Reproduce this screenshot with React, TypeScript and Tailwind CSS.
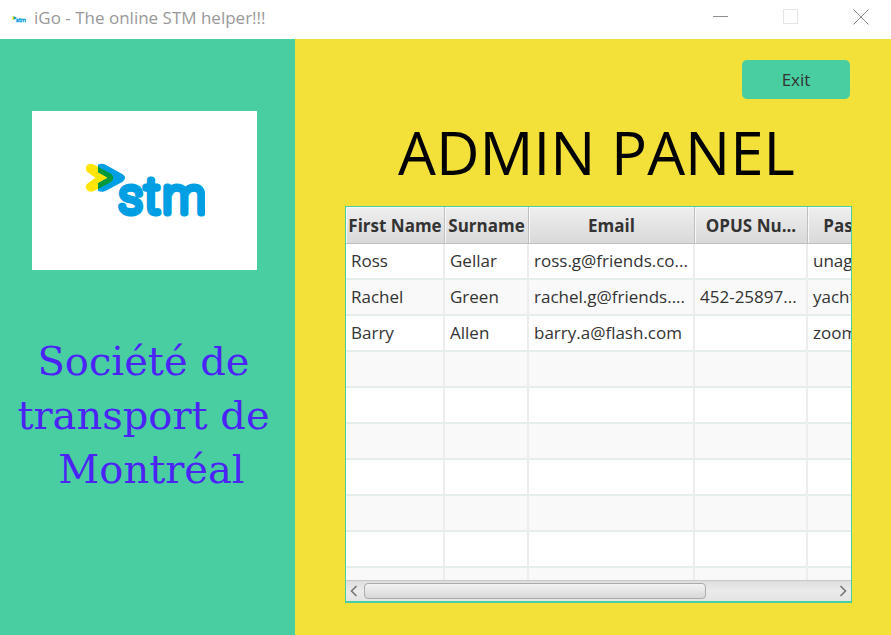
import React, { useId } from "react";

const columns = [
  { title: "First Name", width: "w-[99px]" },
  { title: "Surname", width: "w-[84px]" },
  { title: "Email", width: "w-[166px]" },
  { title: "OPUS Nu...", width: "w-[113px]" },
  { title: "Password", width: "w-[113px]" },
];

const users = [
  ["Ross", "Gellar", "ross.g@friends.co...", "", "unagi"],
  ["Rachel", "Green", "rachel.g@friends....", "452-25897...", "yacht"],
  ["Barry", "Allen", "barry.a@flash.com", "", "zoom"],
];

const emptyRow = ["", "", "", "", ""];
const rows = [...users, ...Array.from({ length: 7 }, () => emptyRow)];

function StmLogo({ className }: { className: string }) {
  const clipId = useId();
  const back =
    "M62 41Q69 41 76 46L123 71Q137 83 123 96L76 121Q66 128 56 124Q42 116 50 103L76 83L51 65Q44 55 51 46Q56 41 62 41Z";
  const front =
    "M84 44Q96 38 108 45L158 73Q173 83 158 95L108 122Q96 128 84 122V99L112 83L84 67Z";
  return (
    <svg viewBox="45 39 360 165" className={className} role="img" aria-label="stm">
      <clipPath id={clipId}>
        <path d={front} />
      </clipPath>
      <path d={back} fill="#ffe500" />
      <path d={front} fill="#009fe3" />
      <path d={back} fill="#009a3d" clipPath={`url(#${clipId})`} />
      <path d="M83 67L112 83L83 99Z" fill="#ffe500" />
      <text
        y="190"
        x="147 224 279"
        fontSize="142"
        fontWeight="100"
        fill="#009fe3"
        stroke="#009fe3"
        strokeWidth="21"
        strokeLinejoin="round"
        className="font-[Roboto,sans-serif]"
      >
        stm
      </text>
    </svg>
  );
}

function TitleBar() {
  return (
    <header className="flex h-[39px] shrink-0 items-center bg-white pl-3 pr-[22px]">
      <StmLogo className="h-[7px] w-[14px]" />
      <span className="ml-2 -mt-1 grow text-[17px] leading-6 text-[#999999]">
        iGo - The online STM helper!!!
      </span>
      <div className="-mt-1.5 flex gap-[54px]">
        <button aria-label="Minimize">
          <svg width="16" height="16" className="block" stroke="#8f8f8f" fill="none">
            <path d="M0 7.5H15" />
          </svg>
        </button>
        <button aria-label="Maximize" disabled>
          <svg width="16" height="16" className="block" stroke="#e6e6e6" fill="none">
            <rect x="0.5" y="0.5" width="14" height="14" />
          </svg>
        </button>
        <button aria-label="Close">
          <svg width="16" height="16" className="block" stroke="#8a8a8a" fill="none">
            <path d="M0.5 0.5L15.5 15.5M15.5 0.5L0.5 15.5" />
          </svg>
        </button>
      </div>
    </header>
  );
}

function Sidebar() {
  return (
    <aside className="w-[295px] shrink-0 bg-[#49cea2] pt-[72px]">
      <div className="ml-8 flex h-[159px] w-[225px] items-center justify-center bg-white">
        <StmLogo className="h-[55px] w-[120px]" />
      </div>
      <p className="mt-16 pr-2 text-center font-['DejaVu_Serif',serif] text-[40px] leading-[54px] text-[#4b23f5]">
        Société de
        <br />
        transport de
        <br />
        <span className="pl-4">Montréal</span>
      </p>
    </aside>
  );
}

function UserTable() {
  return (
    <div className="min-h-0 grow overflow-hidden bg-white">
      <table className="w-[575px] table-fixed border-separate border-spacing-0 text-[17px] leading-6 text-[#333333]">
        <thead>
          <tr>
            {columns.map((c) => (
              <th
                key={c.title}
                className={`${c.width} h-[37px] overflow-hidden whitespace-nowrap border-b border-r border-[#bfbfbf] bg-linear-to-b from-[#efefef] to-[#d9d9d9] p-0 pt-0.5 text-center font-bold shadow-[inset_1px_1px_0_#f8f8f8]`}
              >
                {c.title}
              </th>
            ))}
          </tr>
        </thead>
        <tbody>
          {rows.map((row, i) => (
            <tr key={i} className="bg-white even:bg-[#f9f9f9]">
              {row.map((value, j) => (
                <td
                  key={j}
                  className="h-9 overflow-hidden whitespace-nowrap border-b-2 border-r-2 border-b-[#e6eeec] border-r-[#ededed] py-0 pl-[5px] pr-0"
                >
                  {value}
                </td>
              ))}
            </tr>
          ))}
        </tbody>
      </table>
    </div>
  );
}

function ScrollBar() {
  return (
    <div className="flex h-[21px] shrink-0 items-center border-t border-[#c8c8c8] bg-linear-to-b from-[#dedede] via-[#ebebeb] to-[#e4e4e4] px-1">
      <button aria-label="Scroll left">
        <svg width="8" height="12" className="block" fill="none" stroke="#757575" strokeWidth="1.6">
          <path d="M6.5 1L1.5 6L6.5 11" />
        </svg>
      </button>
      <div className="mx-[6px] grow">
        <div className="h-4 w-[73%] rounded-[4px] border border-[#ababab] bg-linear-to-b from-[#f3f3f3] to-[#d8d8d8]" />
      </div>
      <button aria-label="Scroll right">
        <svg width="8" height="12" className="block" fill="none" stroke="#757575" strokeWidth="1.6">
          <path d="M1.5 1L6.5 6L1.5 11" />
        </svg>
      </button>
    </div>
  );
}

export default function App() {
  return (
    <div className="flex h-screen flex-col font-['Open_Sans','Noto_Sans',sans-serif]">
      <TitleBar />
      <div className="flex min-h-0 grow">
        <Sidebar />
        <main className="flex min-w-0 grow flex-col bg-[#f3e13a] pb-8 pl-[50px] pr-[39px] pt-[21px]">
          <button className="mr-0.5 h-[39px] w-[108px] shrink-0 self-end rounded-[5px] bg-[#49cea2] text-[17px] leading-6 text-[#333333]">
            Exit
          </button>
          <h1 className="mt-2 pr-1 text-center text-[60px] leading-[90px] text-black">ADMIN PANEL</h1>
          <section className="mt-[9px] flex min-h-0 grow flex-col border border-b-2 border-[#49cea2]">
            <UserTable />
            <ScrollBar />
          </section>
        </main>
      </div>
    </div>
  );
}
